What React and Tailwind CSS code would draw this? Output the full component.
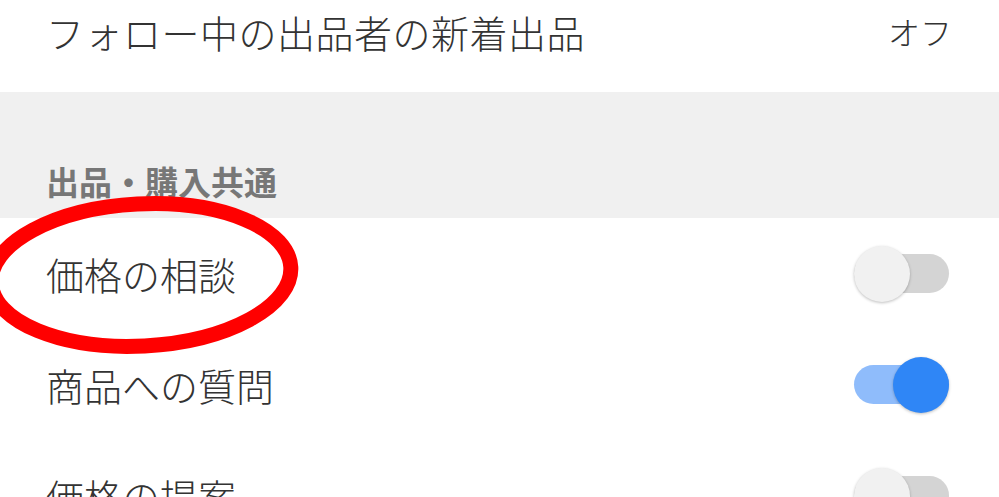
// Notification settings list with toggles
const font = { fontFamily: '"Noto Sans CJK JP", "Noto Sans", sans-serif' }

function Toggle({ on }) {
  return (
    <div className="relative w-[95px] h-[56px] flex items-center">
      <div className={`w-full h-[39px] rounded-full ${on ? 'bg-[#8fbcfb]' : 'bg-[#d4d4d4]'}`} />
      <div
        className={`absolute top-0 w-[56px] h-[56px] rounded-full shadow-[0_1px_3px_rgba(0,0,0,0.25)] ${
          on ? 'right-0 bg-[#2f86f6]' : 'left-0 bg-[#f1f1f1]'
        }`}
      />
    </div>
  )
}

function Row({ label, on }) {
  return (
    <div className="h-[111px] flex items-center justify-between pl-[46px] pr-[50px] bg-white">
      <span className="text-[38px] font-light text-[#333]">{label}</span>
      <Toggle on={on} />
    </div>
  )
}

export default function App() {
  return (
    <div className="relative w-[999px] h-[497px] overflow-hidden bg-white" style={font}>
      <div className="h-[92px] flex items-center justify-between pl-[46px] pr-[47px] pb-[30px]">
        <span className="text-[38px] font-light text-[#333] tracking-[0.5px]">フォロー中の出品者の新着出品</span>
        <span className="text-[32px] font-light text-[#333]">オフ</span>
      </div>
      <div className="h-[126px] bg-[#f0f0f0] flex items-end pl-[46px] pb-[12px]">
        <span className="text-[33px] font-bold text-[#777]">出品・購入共通</span>
      </div>
      <Row label="価格の相談" on={false} />
      <Row label="商品への質問" on={true} />
      <Row label="価格の提案" on={false} />

      {/* hand-drawn red ring around the first option */}
      <svg className="absolute left-0 top-0 pointer-events-none" width="999" height="497">
        <ellipse cx="141" cy="275" rx="150" ry="71" fill="none" stroke="#ff0000" strokeWidth="15" transform="rotate(-3 141 275)" />
      </svg>
    </div>
  )
}
